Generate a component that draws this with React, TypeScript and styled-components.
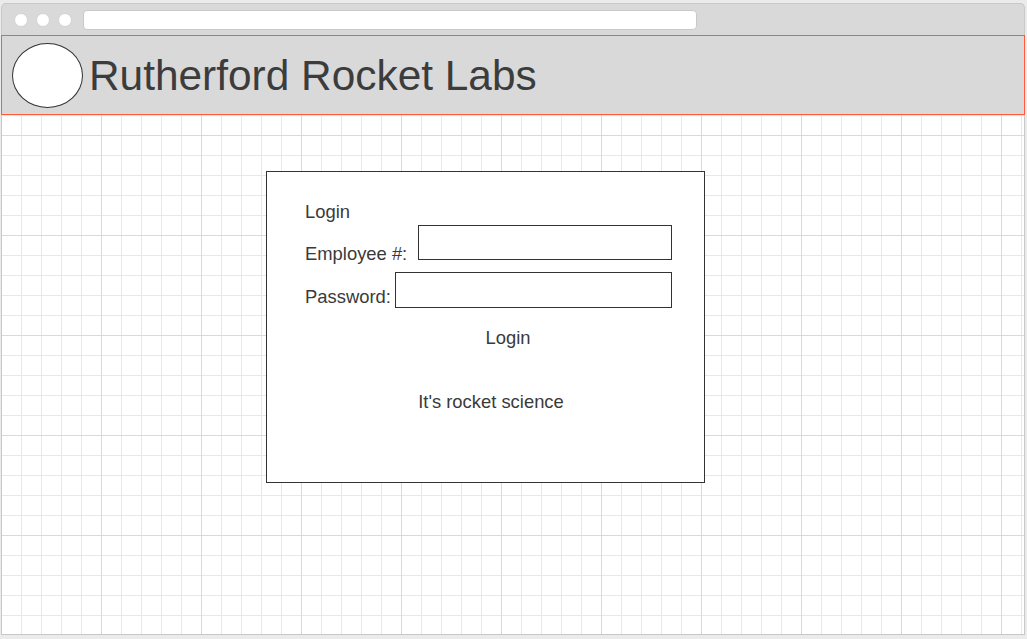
import React from "react";
import styled, { createGlobalStyle } from "styled-components";

const Global = createGlobalStyle`
  html, body { margin: 0; padding: 0; }
  body {
    background: #ebebeb;
    font-family: "Liberation Sans", Arial, sans-serif;
    color: #3a3a3a;
  }
  * { box-sizing: border-box; }
`;

const Window = styled.div`
  width: 1024px;
  margin: 3px 0 0 1px;
  display: flex;
  flex-direction: column;
`;

const Chrome = styled.div`
  height: 32px;
  background: #d9d9d9;
  border: 1px solid #c8c8c8;
  border-bottom: none;
  border-radius: 5px 5px 0 0;
  display: flex;
  align-items: center;
  padding: 0 0 0 12px;
  gap: 8px;
`;

const Dot = styled.span`
  width: 14px;
  height: 14px;
  border-radius: 50%;
  background: #fff;
  border: 1px solid #d2d2d2;
  flex: none;
`;

const Address = styled.div`
  width: 614px;
  height: 20px;
  margin-left: 3px;
  background: #fff;
  border: 1px solid #c9c9c9;
  border-radius: 4px;
`;

const Header = styled.header`
  height: 80px;
  background: #d9d9d9;
  border: 1px solid #ff5a3a;
  display: flex;
  align-items: center;
  padding-left: 10px;
  gap: 6px;
`;

const Logo = styled.div`
  width: 71px;
  height: 65px;
  border-radius: 50%;
  background: #fff;
  border: 1px solid #333;
  flex: none;
`;

const Title = styled.h1`
  margin: 0;
  font-weight: normal;
  font-size: 42.4px;
  line-height: 48px;
  color: #3c3c3c;
  padding-top: 1px;
`;

const Canvas = styled.main`
  height: 520px;
  border: 1px solid #c8c8c8;
  border-top: none;
  background-color: #fff;
  background-image:
    linear-gradient(to right, transparent 99px, #d9d9d9 99px),
    linear-gradient(to bottom, transparent 99px, #d9d9d9 99px),
    linear-gradient(to right, transparent 19px, #e8e8e8 19px),
    linear-gradient(to bottom, transparent 19px, #e8e8e8 19px);
  background-size: 100px 100%, 100% 100px, 20px 100%, 100% 20px;
  background-position: 0 0, 0 21px, 0 0, 0 1px;
  padding: 56px 0 0 264px;
`;

const Card = styled.section`
  width: 439px;
  height: 312px;
  background: #fff;
  border: 1px solid #333;
  padding: 29px 32px 0 38px;
  display: flex;
  flex-direction: column;
  font-size: 18.4px;
  line-height: 21px;
  color: #3a3a3a;
`;

const Heading = styled.div`
  margin-bottom: 3px;
`;

const Row = styled.div<{ $gap?: number }>`
  display: flex;
  align-items: flex-start;
  margin-top: ${(p) => p.$gap ?? 0}px;
`;

const Label = styled.label<{ $drop: number; $space: number }>`
  margin-top: ${(p) => p.$drop}px;
  margin-right: ${(p) => p.$space}px;
  white-space: nowrap;
  flex: none;
`;

const Field = styled.input<{ $h: number }>`
  flex: 1;
  min-width: 0;
  height: ${(p) => p.$h}px;
  border: 1px solid #333;
  border-radius: 0;
  background: #fff;
  outline: none;
  padding: 0 6px;
  font: inherit;
`;

const Centered = styled.div<{ $shift: number; $top: number }>`
  text-align: center;
  padding-left: ${(p) => p.$shift}px;
  margin-top: ${(p) => p.$top}px;
`;

const LoginButton = styled.button`
  background: none;
  border: none;
  padding: 0;
  font: inherit;
  color: inherit;
  line-height: 21px;
  cursor: pointer;
`;

export default function App() {
  return (
    <>
      <Global />
      <Window>
        <Chrome>
          <Dot />
          <Dot />
          <Dot />
          <Address />
        </Chrome>
        <Header>
          <Logo />
          <Title>Rutherford Rocket Labs</Title>
        </Header>
        <Canvas>
          <Card>
            <Heading>Login</Heading>
            <Row>
              <Label $drop={18} $space={11}>Employee #:</Label>
              <Field $h={35} />
            </Row>
            <Row $gap={8}>
              <Label $drop={14} $space={4}>Password:</Label>
              <Field $h={36} type="password" />
            </Row>
            <Centered $shift={39} $top={19}>
              <LoginButton>Login</LoginButton>
            </Centered>
            <Centered $shift={5} $top={43}>It's rocket science</Centered>
          </Card>
        </Canvas>
      </Window>
    </>
  );
}
